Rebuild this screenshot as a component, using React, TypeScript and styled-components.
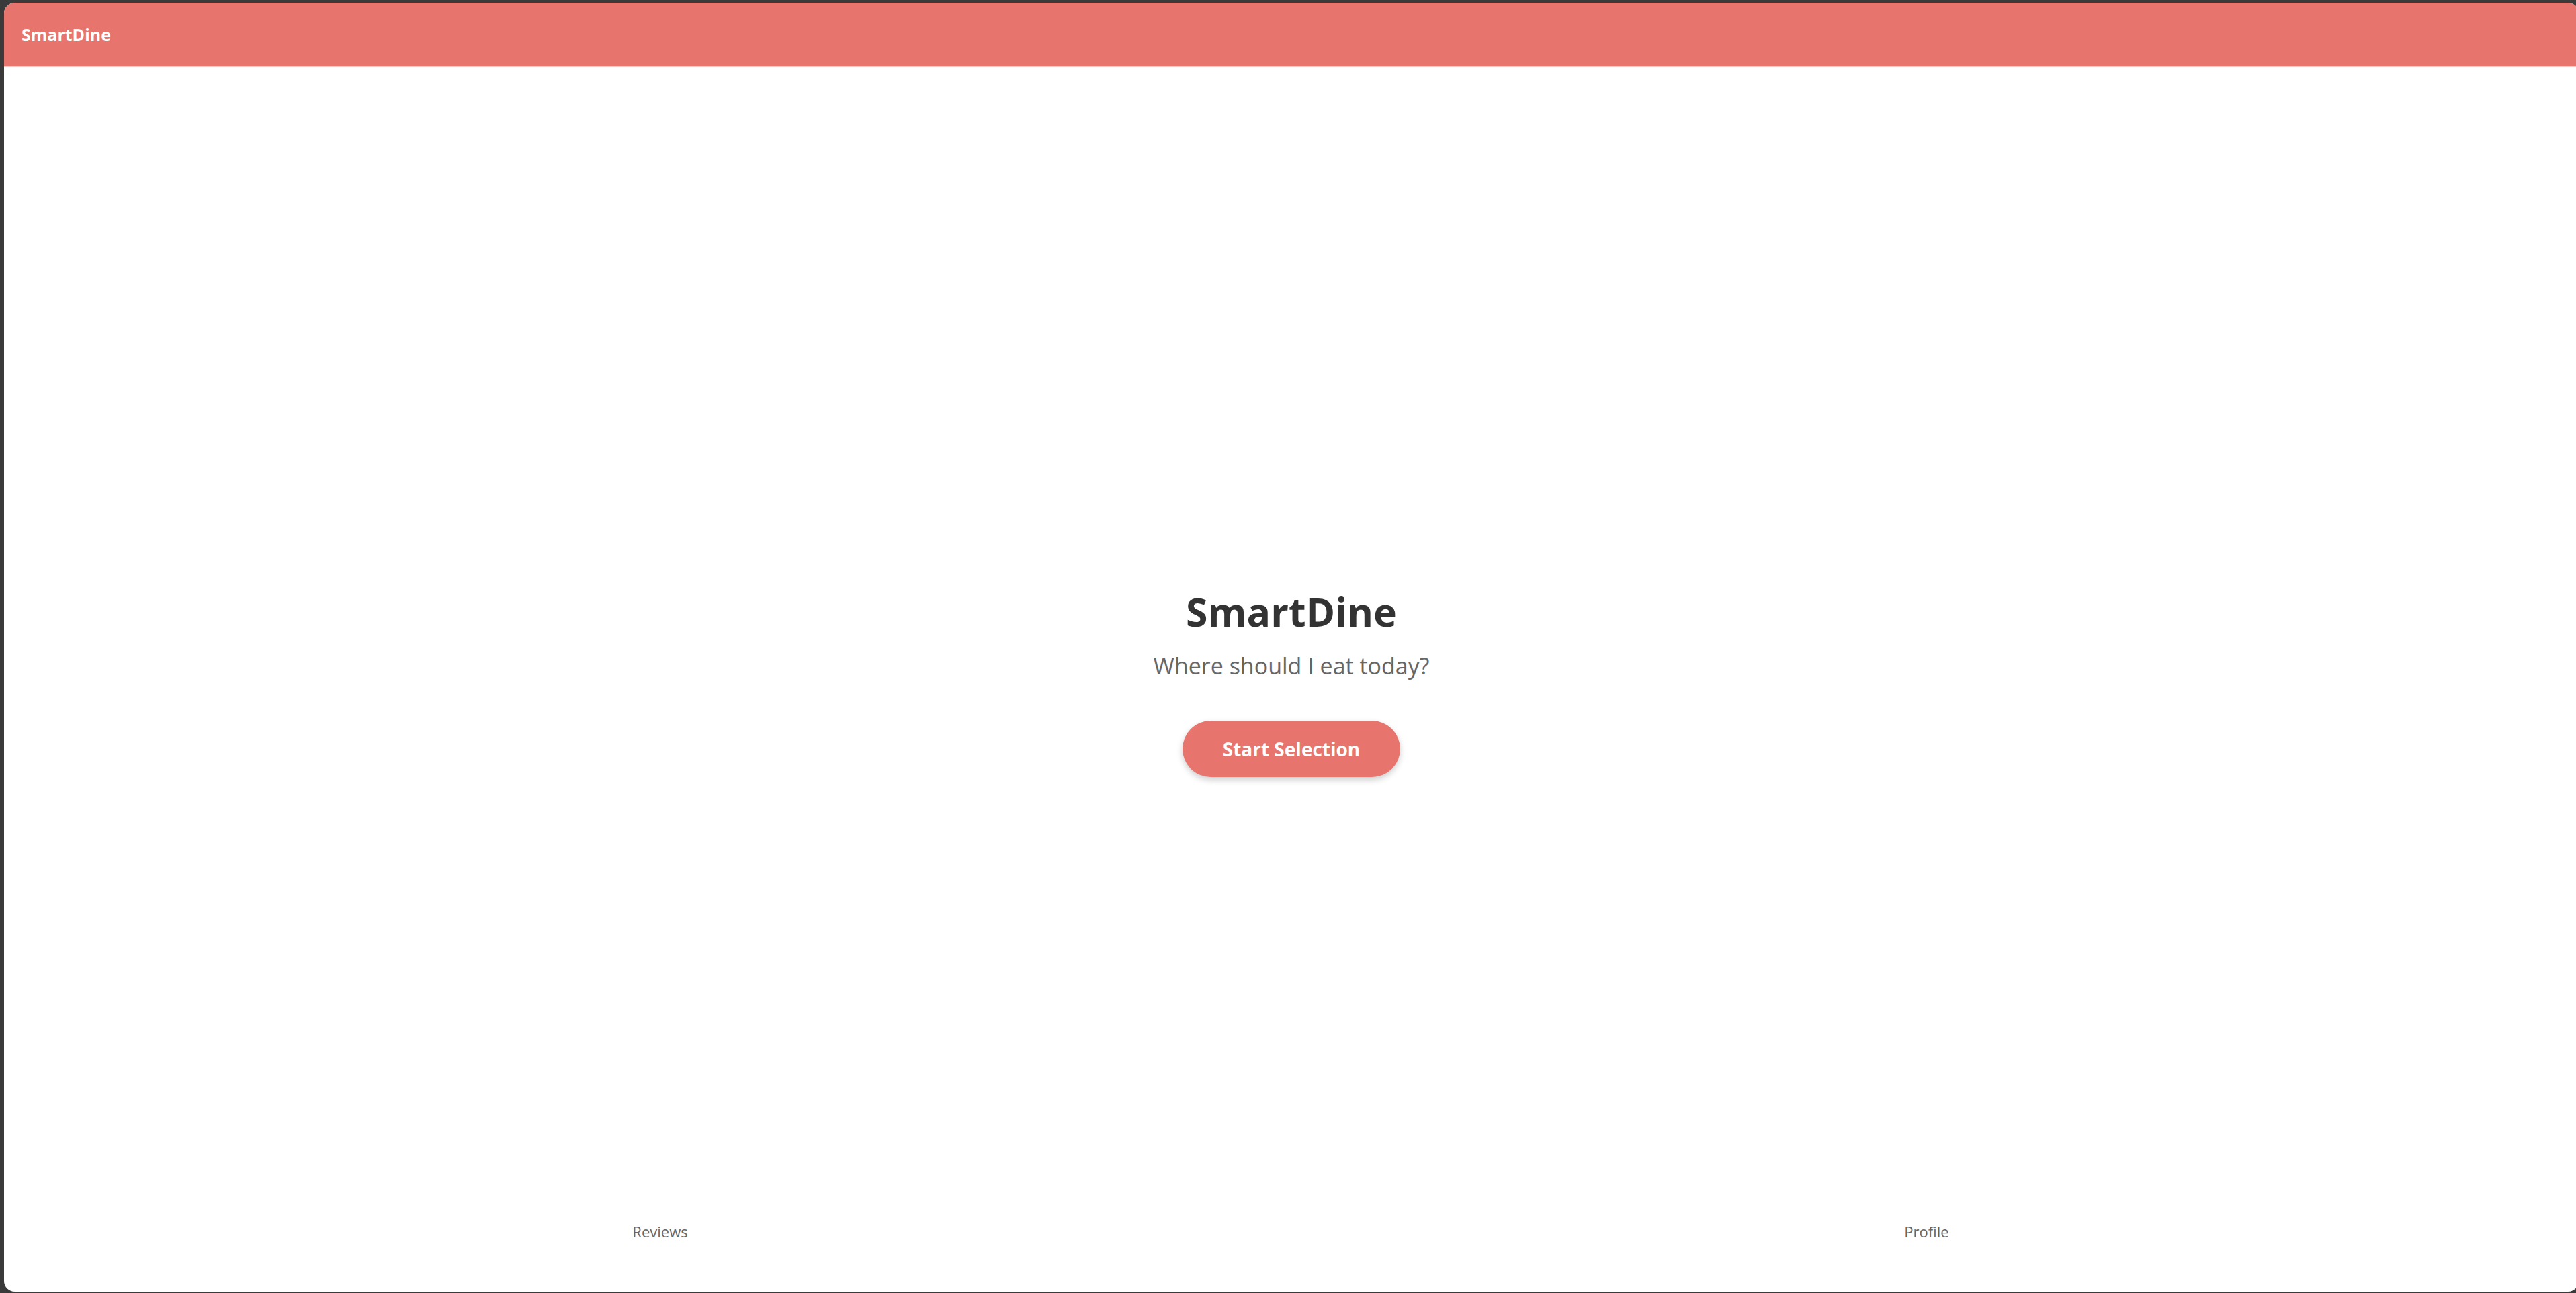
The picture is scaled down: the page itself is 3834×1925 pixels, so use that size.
import React from "react";
import styled, { createGlobalStyle } from "styled-components";

const GlobalStyle = createGlobalStyle`
  html, body {
    margin: 0;
    padding: 0;
    background: #3a3a3a;
    overflow: hidden;
  }
  * { box-sizing: border-box; }
`;

const Window = styled.div`
  margin: 4px 0 0 6px;
  width: 3832px;
  height: 1919px;
  background: #ffffff;
  border-radius: 16px;
  overflow: hidden;
  display: flex;
  flex-direction: column;
  font-family: "Open Sans", "Noto Sans", sans-serif;
`;

const Header = styled.header`
  height: 96px;
  flex: 0 0 auto;
  background: #e7756e;
  border-bottom: 1px solid #e2d6d4;
  display: flex;
  align-items: center;
  padding-left: 26px;
`;

const Brand = styled.div`
  color: #ffffff;
  font-size: 25px;
  font-weight: 700;
  line-height: 1;
`;

const Main = styled.main`
  flex: 1;
  display: flex;
  flex-direction: column;
  align-items: center;
  justify-content: center;
  padding-top: 112px;
`;

const Title = styled.h1`
  margin: 0;
  font-size: 59px;
  font-weight: 700;
  line-height: 80px;
  color: #333333;
`;

const Subtitle = styled.p`
  margin: 16px 0 0;
  font-size: 34px;
  line-height: 50px;
  color: #666666;
`;

const StartButton = styled.button`
  margin-top: 57px;
  height: 84px;
  padding: 0 60px;
  border: none;
  border-radius: 42px;
  background: #e7756e;
  color: #ffffff;
  font-family: inherit;
  font-size: 28px;
  font-weight: 700;
  box-shadow: 0 4px 10px rgba(0, 0, 0, 0.2);
  cursor: pointer;
`;

const Nav = styled.nav`
  flex: 0 0 auto;
  display: grid;
  grid-template-columns: 1fr 1fr;
  padding: 0 28px 72px 34px;
`;

const NavItem = styled.div`
  text-align: center;
  font-size: 22px;
  line-height: 36px;
  color: #666666;
`;

export default function App() {
  return (
    <>
      <GlobalStyle />
      <Window>
        <Header>
          <Brand>SmartDine</Brand>
        </Header>
        <Main>
          <Title>SmartDine</Title>
          <Subtitle>Where should I eat today?</Subtitle>
          <StartButton>Start Selection</StartButton>
        </Main>
        <Nav>
          <NavItem>Reviews</NavItem>
          <NavItem>Profile</NavItem>
        </Nav>
      </Window>
    </>
  );
}
